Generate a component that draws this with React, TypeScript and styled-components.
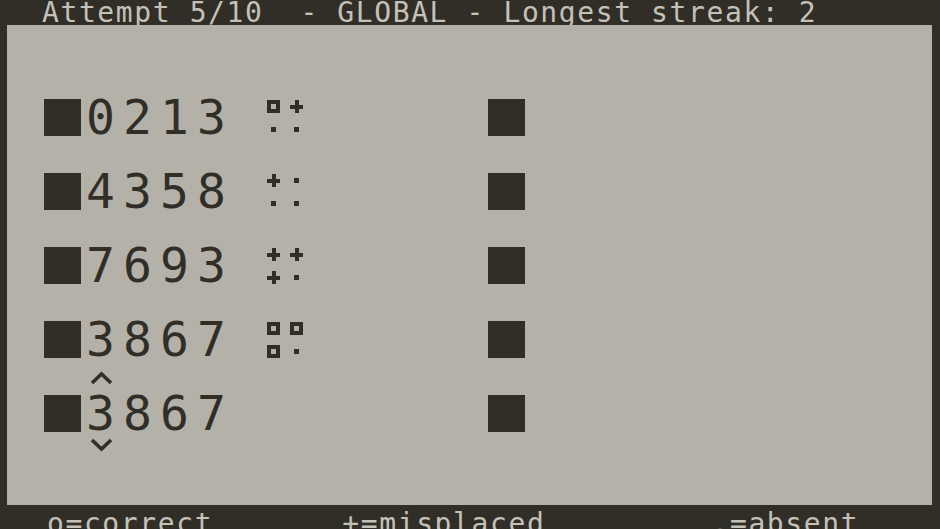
import React from 'react';
import styled, { createGlobalStyle } from 'styled-components';

const DARK = '#312e27';
const LIGHT = '#b4b1a9';
const INK_LIGHT = '#c4c1b9';

type Mark = 'hit' | 'near' | 'miss';

const guesses: { code: string; marks?: Mark[] }[] = [
  { code: '0213', marks: ['hit', 'near', 'miss', 'miss'] },
  { code: '4358', marks: ['near', 'miss', 'miss', 'miss'] },
  { code: '7693', marks: ['near', 'near', 'near', 'miss'] },
  { code: '3867', marks: ['hit', 'hit', 'hit', 'miss'] },
  { code: '3867' },
];

const activeRow = 4;
const cursor = 0;

const GlobalStyle = createGlobalStyle`
  html, body {
    margin: 0;
    padding: 0;
    background: ${DARK};
  }
`;

const Screen = styled.div`
  width: 940px;
  height: 529px;
  display: flex;
  flex-direction: column;
  background: ${DARK};
  overflow: hidden;
  font-family: 'DejaVu Sans Mono', 'Liberation Mono', monospace;
`;

const Bar = styled.div<{ $bottom?: boolean }>`
  flex: none;
  height: ${({ $bottom }) => ($bottom ? 24 : 25)}px;
  padding: ${({ $bottom }) => ($bottom ? '6px 0 0 47px' : '0 0 0 42px')};
  box-sizing: border-box;
  color: ${INK_LIGHT};
  font-size: 28px;
  line-height: 25px;
  letter-spacing: 1.6px;
  white-space: pre;
`;

const Board = styled.div`
  flex: 1;
  margin: 0 8px 0 7px;
  padding: 74px 0 0 37px;
  background: ${LIGHT};
  display: flex;
  flex-direction: column;
  gap: 37px;
`;

const Row = styled.div`
  display: grid;
  grid-template-columns: 37px 186px 221px 37px;
  height: 37px;
  align-items: center;
`;

const Block = styled.div`
  width: 37px;
  height: 37px;
  background: ${DARK};
`;

const Code = styled.div`
  display: flex;
  padding-left: 5px;
`;

const Digit = styled.span`
  position: relative;
  width: 37px;
  font-size: 48px;
  line-height: 37px;
  color: ${DARK};
`;

const Caret = styled.svg<{ $down?: boolean }>`
  position: absolute;
  left: 4px;
  width: 23px;
  height: 14px;
  ${({ $down }) => ($down ? 'bottom: -20px;' : 'top: -24px;')}
`;

const Hints = styled.div`
  display: grid;
  grid-template-columns: 13px 13px;
  grid-auto-rows: 13px;
  gap: 10px;
  padding-top: 1px;
`;

const bar = (w: number, h: number) =>
  `linear-gradient(${DARK}, ${DARK}) center / ${w}px ${h}px no-repeat`;

const Hint = styled.span<{ $kind: Mark }>`
  width: 13px;
  height: 13px;
  box-sizing: border-box;
  ${({ $kind }) =>
    $kind === 'hit'
      ? `border: 4px solid ${DARK};`
      : $kind === 'near'
      ? `background: ${bar(13, 4)}, ${bar(4, 13)};`
      : `background: ${bar(5, 5)};`}
`;

function Chevron({ down }: { down?: boolean }) {
  return (
    <Caret $down={down} viewBox="0 0 23 14">
      <polyline
        points={down ? '2,2 11.5,11 21,2' : '2,12 11.5,3 21,12'}
        fill="none"
        stroke={DARK}
        strokeWidth="3.5"
        strokeLinejoin="miter"
      />
    </Caret>
  );
}

export default function App() {
  return (
    <>
      <GlobalStyle />
      <Screen>
        <Bar>Attempt 5/10  - GLOBAL - Longest streak: 2</Bar>
        <Board>
          {guesses.map((g, i) => (
            <Row key={i}>
              <Block />
              <Code>
                {g.code.split('').map((d, j) => (
                  <Digit key={j}>
                    {i === activeRow && j === cursor && <Chevron />}
                    {d}
                    {i === activeRow && j === cursor && <Chevron down />}
                  </Digit>
                ))}
              </Code>
              <Hints>
                {(g.marks || []).map((m, j) => (
                  <Hint key={j} $kind={m} />
                ))}
              </Hints>
              <Block />
            </Row>
          ))}
        </Board>
        <Bar $bottom>o=correct       +=misplaced         .=absent</Bar>
      </Screen>
    </>
  );
}
